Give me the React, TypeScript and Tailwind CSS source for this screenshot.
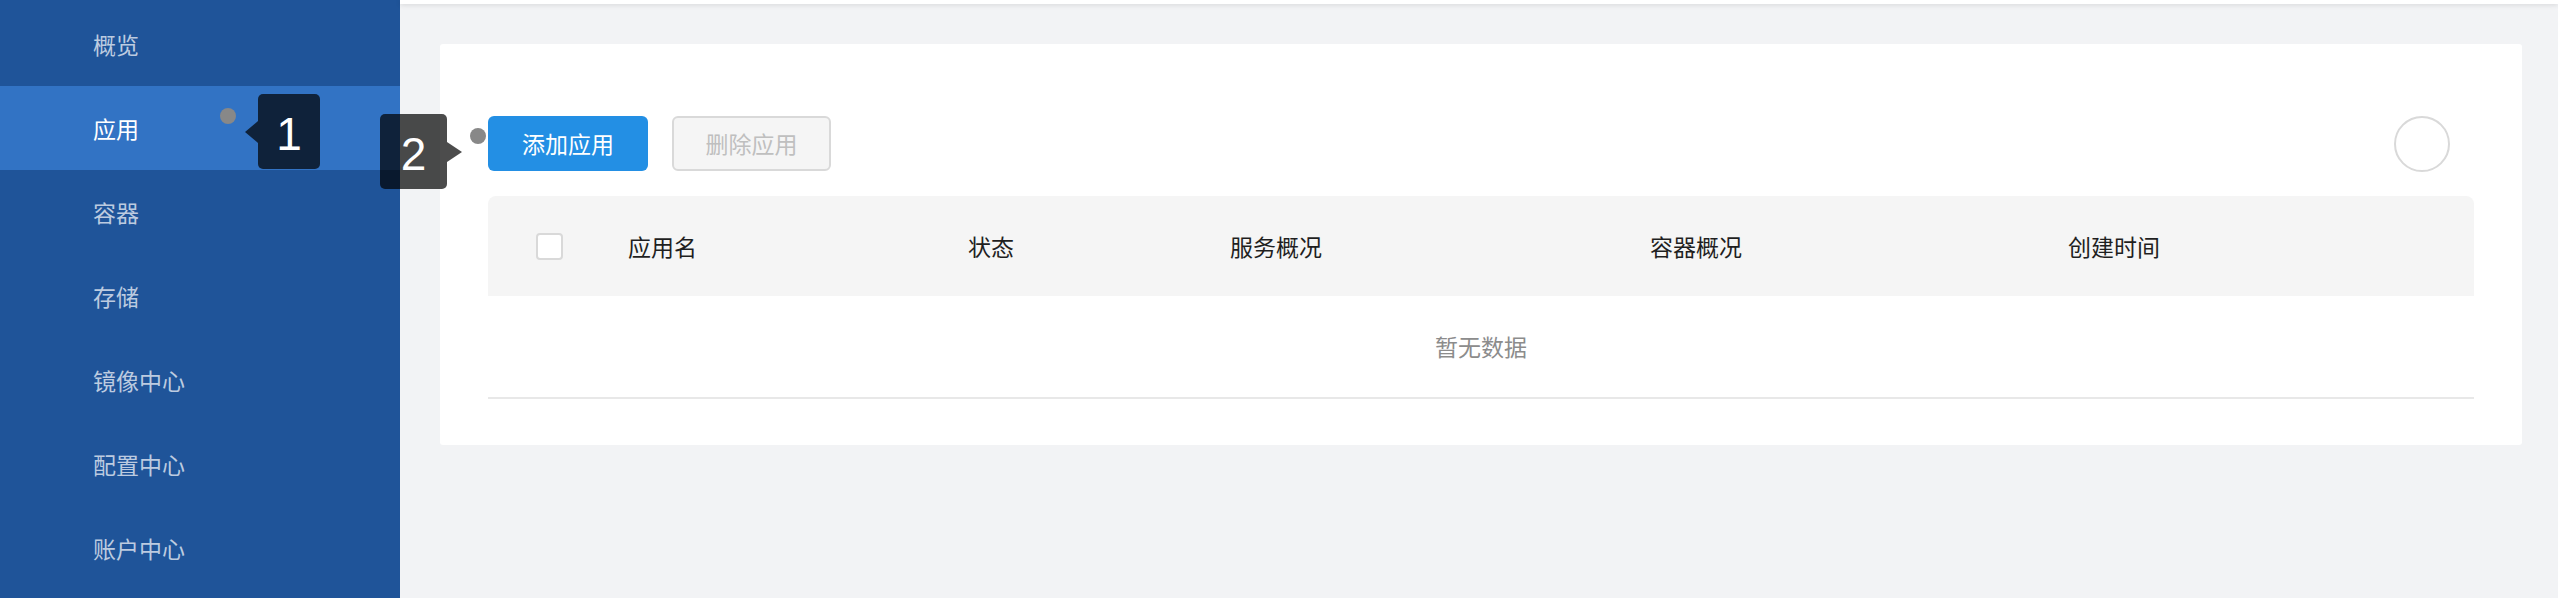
import React from "react";

const navItems = ["概览", "应用", "容器", "存储", "镜像中心", "配置中心", "账户中心"];

export default function App() {
  const font = { fontFamily: '"Noto Sans CJK SC", "Noto Sans", sans-serif' };
  return (
    <div className="relative flex h-[598px] w-full overflow-hidden" style={font}>
      {/* Sidebar */}
      <aside className="w-[400px] shrink-0 bg-[#1f5499] pt-[2px]">
        {navItems.map((item) => {
          const active = item === "应用";
          return (
            <div
              key={item}
              className={`flex h-[84px] items-center pl-[93px] text-[23px] ${
                active ? "bg-[#3273c4] text-white" : "text-[#bccbe0]"
              }`}
            >
              {item}
            </div>
          );
        })}
      </aside>

      {/* Main */}
      <main className="flex flex-1 flex-col bg-[#f2f3f5]">
        <div className="h-[4px] bg-white shadow-[0_1px_5px_rgba(0,0,0,0.12)]" />
        <div className="pl-[40px] pr-[36px] pt-[40px]">
          <div className="rounded-[3px] bg-white px-[48px] pb-[46px] pt-[72px]">
            {/* Toolbar */}
            <div className="flex h-[55px] items-center pr-[24px]">
              <button className="flex h-[55px] w-[160px] items-center justify-center rounded-[6px] bg-[#238fe4] text-[23px] text-white">
                添加应用
              </button>
              <button className="ml-[24px] flex h-[55px] w-[159px] items-center justify-center rounded-[6px] border-2 border-[#d9d9d9] bg-[#f5f5f5] text-[23px] text-[#bfbfbf]">
                删除应用
              </button>
              <div className="ml-auto h-[56px] w-[56px] rounded-full border-2 border-[#d9d9d9] bg-white" />
            </div>

            {/* Table */}
            <div className="mt-[25px]">
              <div className="grid h-[100px] grid-cols-[114px_340px_262px_420px_418px_1fr] items-center rounded-t-[8px] bg-[#f5f5f5] text-[23px] text-[#1f1f1f]">
                <div className="pl-[48px]">
                  <div className="h-[27px] w-[27px] rounded-[4px] border-2 border-[#d9d9d9] bg-white" />
                </div>
                <div className="pl-[26px]">应用名</div>
                <div className="pl-[26px]">状态</div>
                <div className="pl-[26px]">服务概况</div>
                <div className="pl-[26px]">容器概况</div>
                <div className="pl-[26px]">创建时间</div>
              </div>
              <div className="flex h-[103px] items-center justify-center border-b-2 border-[#e8e8e8] text-[23px] text-[#8c8c8c]">
                暂无数据
              </div>
            </div>
          </div>
        </div>
      </main>

      {/* Tour markers */}
      <div className="absolute left-[220px] top-[108px] h-[16px] w-[16px] rounded-full bg-[#888888]" />
      <div className="absolute left-[245px] top-[94px] flex items-center">
        <div className="h-0 w-0 border-y-[11px] border-r-[13px] border-y-transparent border-r-black/70" />
        <div
          className="flex h-[75px] w-[62px] items-center justify-center rounded-[5px] bg-black/70 pt-[6px] text-[46px] text-white"
          style={{ fontFamily: '"Liberation Sans", Arial, sans-serif' }}
        >
          1
        </div>
      </div>

      <div className="absolute left-[470px] top-[128px] h-[16px] w-[16px] rounded-full bg-[#888888]" />
      <div className="absolute left-[380px] top-[114px] flex items-center">
        <div
          className="flex h-[75px] w-[67px] items-center justify-center rounded-[5px] bg-black/70 pt-[6px] text-[46px] text-white"
          style={{ fontFamily: '"Liberation Sans", Arial, sans-serif' }}
        >
          2
        </div>
        <div className="h-0 w-0 border-y-[10px] border-l-[15px] border-y-transparent border-l-black/70" />
      </div>
    </div>
  );
}
